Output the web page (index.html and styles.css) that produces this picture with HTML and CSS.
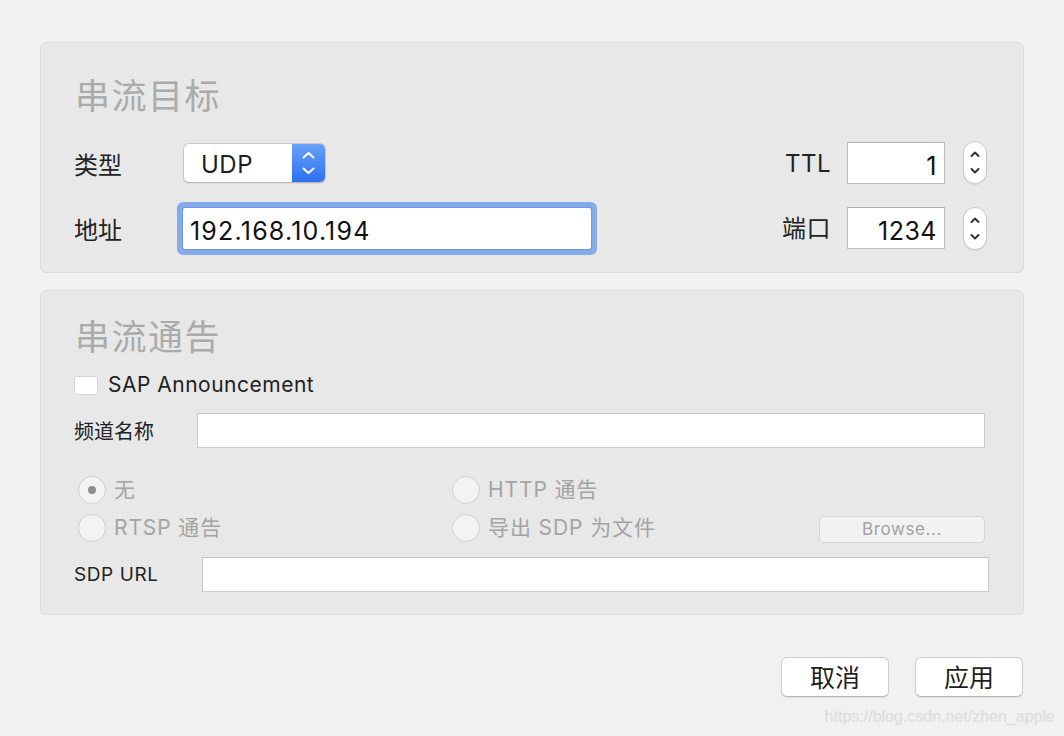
FILE: index.html
```html
<!DOCTYPE html>
<html lang="zh-CN">
<head>
<meta charset="utf-8">
<title>串流</title>
<link rel="stylesheet" href="styles.css">
</head>
<body>
<div class="window">
  <section class="panel panel-target">
    <h2 class="panel-title">串流目标</h2>
    <div class="row row-top">
      <span class="label label-left">类型</span>
      <div class="popup">
        <span class="popup-value">UDP</span>
        <span class="popup-arrows">
          <svg width="33" height="40" viewBox="0 0 33 40"><path d="M11.5 14.5 L16.5 10 L21.5 14.5" fill="none" stroke="#fff" stroke-width="2" stroke-linecap="round" stroke-linejoin="round"/><path d="M11.5 25.5 L16.5 30 L21.5 25.5" fill="none" stroke="#fff" stroke-width="2" stroke-linecap="round" stroke-linejoin="round"/></svg>
        </span>
      </div>
      <div class="spacer"></div>
      <span class="label label-right">TTL</span>
      <div class="numfield">1</div>
      <div class="stepper">
        <svg width="24" height="43" viewBox="0 0 24 43"><path d="M8.5 15 L12 11.5 L15.5 15" fill="none" stroke="#333" stroke-width="2" stroke-linecap="round" stroke-linejoin="round"/><path d="M8.5 28 L12 31.5 L15.5 28" fill="none" stroke="#333" stroke-width="2" stroke-linecap="round" stroke-linejoin="round"/></svg>
      </div>
    </div>
    <div class="row row-bottom">
      <span class="label label-left">地址</span>
      <div class="textfield addr">192.168.10.194</div>
      <div class="spacer"></div>
      <span class="label label-right">端口</span>
      <div class="numfield">1234</div>
      <div class="stepper">
        <svg width="24" height="43" viewBox="0 0 24 43"><path d="M8.5 15 L12 11.5 L15.5 15" fill="none" stroke="#333" stroke-width="2" stroke-linecap="round" stroke-linejoin="round"/><path d="M8.5 28 L12 31.5 L15.5 28" fill="none" stroke="#333" stroke-width="2" stroke-linecap="round" stroke-linejoin="round"/></svg>
      </div>
    </div>
  </section>

  <section class="panel panel-announce">
    <h2 class="panel-title">串流通告</h2>
    <div class="check-row">
      <span class="checkbox"></span>
      <span class="check-label">SAP Announcement</span>
    </div>
    <div class="field-row name-row">
      <span class="small-label name-label">频道名称</span>
      <div class="plainfield name-field"></div>
    </div>
    <div class="radio-grid">
      <div class="radio-item"><span class="radio checked"></span><span class="radio-label">无</span></div>
      <div class="radio-item"><span class="radio"></span><span class="radio-label">HTTP 通告</span></div>
      <div></div>
      <div class="radio-item"><span class="radio"></span><span class="radio-label">RTSP 通告</span></div>
      <div class="radio-item"><span class="radio"></span><span class="radio-label">导出 SDP 为文件</span></div>
      <div class="browse">Browse...</div>
    </div>
    <div class="field-row sdp-row">
      <span class="small-label sdp-label">SDP URL</span>
      <div class="plainfield sdp-field"></div>
    </div>
  </section>

  <div class="actions">
    <div class="button">取消</div>
    <div class="button">应用</div>
  </div>

  <div class="watermark">https://blog.csdn.net/zhen_apple</div>
</div>
</body>
</html>
```

FILE: styles.css
```css
* { box-sizing: border-box; }

html, body {
  margin: 0;
  padding: 0;
}

body {
  width: 1064px;
  height: 736px;
  background: #f1f1f1;
  font-family: "Inter", "Noto Sans CJK SC", sans-serif;
  color: #222;
  overflow: hidden;
}

.window {
  position: relative;
  width: 1064px;
  height: 736px;
  padding: 42px 40px 0 40px;
}

.panel {
  background: #e8e8e8;
  border: 1px solid #dcdcdc;
  border-radius: 6px;
}

.panel-target {
  padding: 29px 36px 23px 33px;
}

.panel-announce {
  margin-top: 17px;
  padding: 22px 34px 22px 33px;
}

.panel-title {
  margin: 0 0 0 1px;
  font-family: "Noto Sans CJK SC", sans-serif;
  font-weight: 400;
  font-size: 35px;
  line-height: 44px;
  height: 44px;
  color: #ababab;
  letter-spacing: 1.5px;
}

.row {
  display: flex;
  align-items: center;
  height: 43px;
}

.row-top { margin-top: 25px; }
.row-bottom { margin-top: 23px; height: 42px; }

.label {
  font-family: "Noto Sans CJK SC", sans-serif;
  font-size: 24px;
  line-height: 30px;
  padding-top: 2px;
  color: #232323;
}

.label-left { width: 109px; }
.label-right {
  margin-right: 16px;
  font-family: "Inter", "Noto Sans CJK SC", sans-serif;
  letter-spacing: 0.5px;
}

.spacer { flex: 1; }

.popup {
  display: flex;
  width: 143px;
  height: 40px;
  border: 1px solid #c6c6c6;
  border-bottom-color: #b8b8b8;
  border-radius: 6px;
  background: #fff;
  box-shadow: 0 1px 1px rgba(0,0,0,0.06);
  overflow: hidden;
}

.popup-value {
  flex: 1;
  padding-left: 17px;
  padding-top: 3px;
  font-size: 24px;
  letter-spacing: 0.5px;
  line-height: 36px;
  color: #1e1e1e;
}

.popup-arrows {
  width: 33px;
  height: 40px;
  margin-top: -1px;
  background: linear-gradient(#6aa3fb, #2a6ff0);
  display: flex;
}

.textfield {
  height: 41px;
  font-size: 25px;
  letter-spacing: 1.2px;
  line-height: 41px;
  padding-top: 3px;
  background: #fff;
  color: #111;
}

.addr {
  width: 408px;
  padding-left: 7px;
  border-radius: 2px;
  box-shadow: 0 0 0 1px #6b98df, 0 0 0 6px #86abea;
}

.numfield {
  width: 98px;
  height: 42px;
  border: 1px solid #bdbdbd;
  border-top-color: #b0b0b0;
  background: #fff;
  font-size: 25px;
  letter-spacing: 0.5px;
  line-height: 40px;
  padding-top: 3px;
  text-align: right;
  padding-right: 7px;
  color: #111;
}

.stepper {
  width: 24px;
  height: 43px;
  margin-left: 18px;
  background: #fff;
  border: 1px solid #c9c9c9;
  border-radius: 12px;
  box-shadow: 0 1px 1px rgba(0,0,0,0.08);
  display: flex;
  align-items: center;
  justify-content: center;
  overflow: hidden;
}

.stepper svg { flex: none; }

.check-row {
  display: flex;
  align-items: center;
  height: 24px;
  margin-top: 16px;
}

.checkbox {
  width: 24px;
  height: 19px;
  background: #fff;
  border: 1px solid #d6d6d6;
  border-radius: 3px;
  margin-right: 10px;
}

.check-label {
  font-size: 21px;
  letter-spacing: 0.5px;
  line-height: 24px;
  color: #1f1f1f;
}

.field-row {
  display: flex;
  align-items: center;
  height: 35px;
}

.name-row { margin-top: 16px; }
.sdp-row { margin-top: 15px; }

.small-label {
  font-family: "Noto Sans CJK SC", sans-serif;
  font-size: 20px;
  line-height: 24px;
  color: #222;
}

.sdp-label {
  font-family: "Inter", "Noto Sans CJK SC", sans-serif;
  font-size: 19px;
  letter-spacing: 0.6px;
  width: 128px;
}
.name-label { width: 123px; }

.plainfield {
  height: 35px;
  background: #fff;
  border: 1px solid #cbcbcb;
  border-top-color: #c0c0c0;
}

.name-field { flex: 1; margin-right: 4px; }
.sdp-field { width: 787px; }

.radio-grid {
  display: grid;
  grid-template-columns: 374px 1fr auto;
  grid-auto-rows: 28px;
  row-gap: 10px;
  margin-top: 28px;
  margin-left: 4px;
  align-items: center;
}

.radio-item {
  display: flex;
  align-items: center;
}

.radio {
  width: 28px;
  height: 28px;
  border-radius: 50%;
  border: 1px solid #d0d0d0;
  background: #f3f3f3;
  margin-right: 8px;
  display: flex;
  align-items: center;
  justify-content: center;
}

.radio.checked::after {
  content: "";
  width: 8px;
  height: 8px;
  border-radius: 50%;
  background: #8e8e8e;
}

.radio-label {
  font-family: "Inter", "Noto Sans CJK SC", sans-serif;
  font-size: 21px;
  letter-spacing: 0.9px;
  line-height: 26px;
  color: #a4a4a4;
}

.browse {
  width: 166px;
  height: 27px;
  margin-right: 4px;
  margin-top: 3px;
  background: #f2f2f2;
  border: 1px solid #d6d6d6;
  border-radius: 5px;
  text-align: center;
  font-size: 17px;
  letter-spacing: 0.6px;
  line-height: 25px;
  color: #a2a2a2;
}

.actions {
  display: flex;
  justify-content: flex-end;
  gap: 26px;
  margin-top: 42px;
  margin-right: 1px;
}

.button {
  width: 108px;
  height: 40px;
  background: #fff;
  border: 1px solid #cdcdcd;
  border-bottom-color: #b9b9b9;
  border-radius: 6px;
  box-shadow: 0 1px 1px rgba(0,0,0,0.08);
  font-family: "Noto Sans CJK SC", sans-serif;
  font-size: 25px;
  line-height: 37px;
  text-align: center;
  color: #1f1f1f;
}

.watermark {
  position: absolute;
  right: 9px;
  bottom: 8px;
  font-family: "Liberation Sans", sans-serif;
  font-size: 16px;
  line-height: 22px;
  color: #dedede;
  text-shadow: 0 0 1px rgba(0,0,0,0.06);
}
```
